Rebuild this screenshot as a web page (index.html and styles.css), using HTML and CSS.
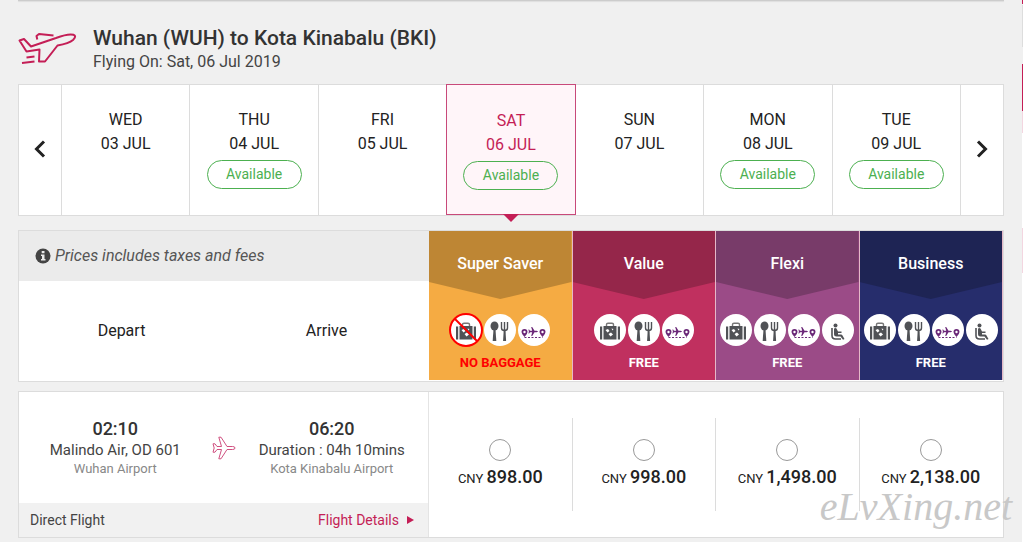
FILE: index.html
```
<!DOCTYPE html>
<html lang="en">
  <head>
    <meta charset="UTF-8" />
    <meta name="viewport" content="width=device-width, initial-scale=1.0" />
    <title>Select Flight</title>
    <link rel="stylesheet" href="styles.css">
  </head>
  <body>
    <svg class="sprite" aria-hidden="true">
      <symbol id="icon-bag" viewBox="0 0 32 32">
        <path d="M12.500 12.500v-2q0-1.200 1.500-1.200h4q1.500 0 1.500 1.200v2" fill="none" stroke="#777" stroke-width="1.400" />
        <path d="M6 12.500h2.200v13h-2.200zM23.800 12.500h2.200v13h-2.200zM9.500 12h13v13.500h-13z" fill="#505256" />
        <path d="M11.500 16l2.500-1 1.500 2-2 1.500zM17.500 14.500l2 .5-1 1.500zM14.500 20l2.500-1.500 2 2-2.500 2z" fill="#fff" />
      </symbol>
      <symbol id="icon-meal" viewBox="0 0 32 32">
        <ellipse cx="10.500" cy="12" rx="4" ry="4.500" fill="#505256" />
        <path d="M9.500 15h2l.8 12h-3.600z" fill="#505256" />
        <path d="M17.500 8v6q0 2.500 3 2.500t3-2.500v-6M20.500 8v9" fill="none" stroke="#505256" stroke-width="1.400" />
        <path d="M19.700 16h1.800l.6 11h-3z" fill="#505256" />
      </symbol>
      <symbol id="icon-route" viewBox="0 0 32 32">
        <path d="M6.500 15a3 3 0 0 1 3 3q0 2-3 5q-3-3-3-5a3 3 0 0 1 3-3zM24.500 15a3 3 0 0 1 3 3q0 2-3 5q-3-3-3-5a3 3 0 0 1 3-3z" fill="#6b2878" />
        <circle cx="6.500" cy="18" r="1.200" fill="#fff" />
        <circle cx="24.500" cy="18" r="1.200" fill="#fff" />
        <path d="M20 17.500q-.5-.7-1.500-.7h-2l-2.300-3.800h-1l1 3.800h-2.200l-.9-1.300h-.7l.5 2-.5 2h.7l.9-1.300h2.200l-1 3.800h1l2.300-3.800h2q1 0 1.500-.7z" fill="#6b2878" />
        <path d="M6.500 23.500h18" fill="none" stroke="#6b2878" stroke-dasharray="2 1.500" />
      </symbol>
      <symbol id="icon-seat" viewBox="0 0 32 32">
        <circle cx="13.500" cy="11.500" r="2" fill="#505256" />
        <path d="M10 14v7.500q0 3.500 3.500 3.500h5.500" fill="none" stroke="#505256" stroke-width="1.600" />
        <path d="M12 14.500q2.500-1.500 3 1l1 2h3.500v1.500h-3.500v1.500h3q1 0 1.500 1l2 3.500-1.500.8-2.500-3.300h-4q-2.500 0-2.500-2.500z" fill="#505256" />
      </symbol>
    </svg>

    <div class="page">
      <main>
        <div class="search-panel"></div>

        <header class="route">
          <svg class="route-icon" viewBox="0 0 60 36" fill="none" stroke="#c41e56" stroke-width="2" stroke-linejoin="round">
            <path d="M1.500 8.500L6 7l7 7.500L38 6q12-4.500 17.500-3.200 3.500 1.200-.5 5.200Q51 11.500 39.500 13.500L27 29.500h-6l.5-12L8.500 19.500z" />
            <path d="M35.500 3.500L21 2l-2.500 2 .8 3.500" />
            <path d="M8.500 25.500l8-1M4 31l12.500-1.500" />
          </svg>
          <div>
            <h1>Wuhan (WUH) to Kota Kinabalu (BKI)</h1>
            <p>Flying On: Sat, 06 Jul 2019</p>
          </div>
        </header>

        <nav class="dates" aria-label="Travel date">
          <button class="arrow" aria-label="Previous days">
            <svg viewBox="0 0 12 18"><path d="M10 1.500L2.500 9l7.500 7.500" /></svg>
          </button>
          <button class="day">WED<br>03 JUL</button>
          <button class="day">THU<br>04 JUL<span class="available">Available</span></button>
          <button class="day">FRI<br>05 JUL</button>
          <button class="day selected">SAT<br>06 JUL<span class="available">Available</span></button>
          <button class="day">SUN<br>07 JUL</button>
          <button class="day">MON<br>08 JUL<span class="available">Available</span></button>
          <button class="day">TUE<br>09 JUL<span class="available">Available</span></button>
          <button class="arrow" aria-label="Next days">
            <svg viewBox="0 0 12 18"><path d="M2 1.500L9.500 9 2 16.500" /></svg>
          </button>
        </nav>

        <section class="fare-header">
          <div class="fare-info">
            <div class="note">
              <svg viewBox="0 0 16 16">
                <circle cx="8" cy="8" r="7.500" fill="#444" />
                <path d="M6.700 3h2.800v2.200h-2.800zM6 6.500h3.500v4.500h1v1.500h-4.500v-1.500h1v-3h-1z" fill="#ebebeb" />
              </svg>
              <em>Prices includes taxes and fees</em>
            </div>
            <div class="columns">
              <span>Depart</span>
              <span>Arrive</span>
            </div>
          </div>
          <div class="fare super-saver">
            <h2>Super Saver</h2>
            <div class="perks">
              <svg class="none"><use href="#icon-bag" /><path d="M5 5l22 22" /><circle cx="16" cy="16" r="16" /></svg>
              <svg><use href="#icon-meal" /></svg>
              <svg><use href="#icon-route" /></svg>
            </div>
            <strong>NO BAGGAGE</strong>
          </div>
          <div class="fare value">
            <h2>Value</h2>
            <div class="perks">
              <svg><use href="#icon-bag" /></svg>
              <svg><use href="#icon-meal" /></svg>
              <svg><use href="#icon-route" /></svg>
            </div>
            <strong>FREE</strong>
          </div>
          <div class="fare flexi">
            <h2>Flexi</h2>
            <div class="perks">
              <svg><use href="#icon-bag" /></svg>
              <svg><use href="#icon-meal" /></svg>
              <svg><use href="#icon-route" /></svg>
              <svg><use href="#icon-seat" /></svg>
            </div>
            <strong>FREE</strong>
          </div>
          <div class="fare business">
            <h2>Business</h2>
            <div class="perks">
              <svg><use href="#icon-bag" /></svg>
              <svg><use href="#icon-meal" /></svg>
              <svg><use href="#icon-route" /></svg>
              <svg><use href="#icon-seat" /></svg>
            </div>
            <strong>FREE</strong>
          </div>
        </section>

        <section class="flight">
          <div class="flight-info">
            <div class="legs">
              <div class="leg">
                <b>02:10</b>
                <span>Malindo Air, OD 601</span>
                <small>Wuhan Airport</small>
              </div>
              <svg class="leg-icon" viewBox="0 0 24 24">
                <path d="M23 12q0-1.500-2.500-1.500h-5.500L9 1.200H6.800l2.700 9.300H5L3 7.800H1L2.200 12 1 16.200h2l2-2.700h4.500L6.800 22.800H9l6-9.300h5.500q2.500 0 2.500-1.500z" />
              </svg>
              <div class="leg">
                <b>06:20</b>
                <span>Duration : 04h 10mins</span>
                <small>Kota Kinabalu Airport</small>
              </div>
            </div>
            <div class="flight-foot">
              <span>Direct Flight</span>
              <a href="#">Flight Details</a>
            </div>
          </div>
          <label class="price"><input type="radio" name="fare"><span>CNY <b>898.00</b></span></label>
          <label class="price"><input type="radio" name="fare"><span>CNY <b>998.00</b></span></label>
          <label class="price"><input type="radio" name="fare"><span>CNY <b>1,498.00</b></span></label>
          <label class="price"><input type="radio" name="fare"><span>CNY <b>2,138.00</b></span></label>
          <div class="watermark">eLvXing.net</div>
        </section>
      </main>

      <aside class="summary">
        <div class="bar top"></div>
        <div class="box"></div>
        <div class="bar"></div>
        <div class="tint"></div>
        <div class="body"></div>
        <div class="tint total"></div>
        <div class="body rest"></div>
      </aside>
    </div>
  </body>
</html>
```
FILE: styles.css
```
* {
  margin: 0;
  padding: 0;
  box-sizing: border-box;
}
body {
  background-color: #f0f0f0;
  color: #222;
  font-family: Roboto, Arial, sans-serif;
  font-size: 16px;
  line-height: 24px;
  overflow: hidden;
}
button {
  border: none;
  background: none;
  font: inherit;
  color: inherit;
  cursor: pointer;
}
.sprite {
  display: none;
}
.page {
  display: flex;
  gap: 18px;
  padding-left: 18px;
  min-height: 100vh;
}
main {
  flex: 1;
}
.search-panel {
  height: 1px;
  background: #ccc;
  box-shadow: 0 1px 1px #ddd;
}

/* route heading */
.route {
  display: flex;
  gap: 15px;
  padding: 25px 0 10px;
}
.route-icon {
  width: 60px;
  height: 36px;
  margin-top: 6px;
}
.route h1 {
  font-size: 21px;
  font-weight: 500;
  line-height: 24px;
  color: #333;
}
.route p {
  color: #444;
}

/* date strip */
.dates {
  display: flex;
  height: 132px;
  background: #fff;
  border: 1px solid #dcdcdc;
}
.arrow {
  width: 42px;
  padding-bottom: 4px;
}
.arrow svg {
  width: 12px;
  height: 18px;
  vertical-align: middle;
}
.arrow path {
  fill: none;
  stroke: #222;
  stroke-width: 3;
}
.day {
  flex: 1;
  display: flex;
  flex-direction: column;
  align-items: center;
  justify-content: flex-start;
  padding-top: 23px;
  border-left: 1px solid #dcdcdc;
}
.day:nth-last-child(2) {
  border-right: 1px solid #dcdcdc;
}
.available {
  width: 95px;
  margin-top: 4px;
  border: 1px solid #4cb050;
  border-radius: 15px;
  color: #4cb050;
  font-size: 14px;
  line-height: 27px;
}
.day.selected {
  position: relative;
  margin: -1px -1px 0 0;
  padding-top: 24px;
  background: #fff5f9;
  border: 1px solid #c8497a;
  color: #c41e56;
}
.day.selected::after {
  content: "";
  position: absolute;
  top: 100%;
  border: 8px solid transparent;
  border-top-color: #c41e56;
  border-bottom: none;
}

/* fare header */
.fare-header,
.flight {
  display: grid;
  grid-template-columns: 20fr repeat(4, 7fr);
  border: 1px solid #dcdcdc;
  background: #fff;
}
.fare-header {
  margin-top: 14px;
  padding-bottom: 1px;
}
.fare-info {
  display: flex;
  flex-direction: column;
}
.note {
  display: flex;
  align-items: center;
  gap: 4px;
  height: 50px;
  padding-left: 16px;
  background: #ebebeb;
  color: #555;
}
.note svg {
  width: 16px;
  height: 16px;
}
.columns {
  flex: 1;
  display: flex;
  align-items: center;
  text-align: center;
}
.columns span {
  flex: 1;
}
.fare {
  display: flex;
  flex-direction: column;
  align-items: center;
  padding-bottom: 5px;
  border-right: 1px solid #e5b8c8;
  color: #fff;
}
.fare h2 {
  width: 100%;
  height: 68px;
  padding-top: 21px;
  font-size: 16px;
  font-weight: 500;
  text-align: center;
  clip-path: polygon(0 0, 100% 0, 100% 75%, 50% 100%, 0 75%);
}
.fare strong {
  margin-top: 5px;
  font-size: 13px;
  font-weight: 700;
}
.perks {
  display: flex;
  gap: 2px;
  margin-top: 15px;
}
.perks svg {
  width: 32px;
  height: 32px;
  border-radius: 50%;
  background: #fff;
}
.perks .none {
  overflow: visible;
}
.perks .none path,
.perks .none circle {
  fill: none;
  stroke: #f00;
  stroke-width: 2;
}
.super-saver {
  background: #f5ab43;
}
.super-saver h2 {
  background: #be8634;
}
.super-saver strong {
  color: #f00;
}
.value {
  background: #c0305f;
}
.value h2 {
  background: #95264a;
}
.flexi {
  background: #9b4b87;
}
.flexi h2 {
  background: #783b69;
}
.business {
  background: #262d6c;
}
.business h2 {
  background: #1e2454;
}

/* flight row */
.flight {
  position: relative;
  margin-top: 9px;
}
.flight-info {
  border-right: 1px solid #e4e4e4;
}
.legs {
  display: flex;
  align-items: center;
  height: 111px;
}
.leg {
  flex: 1;
  display: flex;
  flex-direction: column;
  align-items: center;
  line-height: 20px;
  color: #444;
  white-space: nowrap;
}
.leg b {
  font-size: 18px;
  font-weight: 500;
  line-height: 22px;
  color: #333;
}
.leg span {
  font-size: 15px;
}
.leg small {
  font-size: 13px;
  line-height: 18px;
  color: #888;
}
.leg-icon {
  width: 24px;
  height: 24px;
}
.leg-icon path {
  fill: none;
  stroke: #d05080;
  stroke-width: 1;
}
.flight-foot {
  display: flex;
  justify-content: space-between;
  padding: 0 14px 0 11px;
  background: #f1f1f1;
  color: #444;
  font-size: 14px;
  line-height: 34px;
}
.flight-foot a {
  display: flex;
  align-items: center;
  gap: 8px;
  color: #c41e56;
  text-decoration: none;
}
.flight-foot a::after {
  content: "";
  border: 4px solid transparent;
  border-left: 7px solid #c41e56;
  border-right: none;
}
.price {
  display: flex;
  flex-direction: column;
  align-items: center;
  margin: 26px 0;
  padding-top: 21px;
  border-right: 1px solid #dcdcdc;
  font-size: 13px;
  cursor: pointer;
}
.price:nth-of-type(4) {
  border-right-color: transparent;
}
.price b {
  font-size: 18px;
  font-weight: 500;
}
.price input {
  appearance: none;
  width: 22px;
  height: 22px;
  margin-bottom: 4px;
  border: 1px solid #999;
  border-radius: 50%;
  background: #fff;
}
.price input:checked {
  border: 6px solid #c41e56;
}
.watermark {
  position: absolute;
  right: -9px;
  bottom: 10px;
  color: #c8c8c8;
  font-family: "Liberation Serif", serif;
  font-size: 40px;
  font-style: italic;
  line-height: 40px;
  pointer-events: none;
}

/* booking summary, cut by the window edge */
.summary {
  width: 1px;
  display: flex;
  flex-direction: column;
}
.summary .bar {
  height: 47px;
  background: #c41e56;
}
.summary .top {
  height: 4px;
}
.summary .box {
  height: 42px;
  margin: 1px 0 17px;
  background: #ddd;
}
.summary .tint {
  height: 22px;
  background: #f3d6e0;
}
.summary .body {
  height: 95px;
  background: #fff;
}
.summary .total {
  height: 45px;
}
.summary .rest {
  flex: 1;
}
```
